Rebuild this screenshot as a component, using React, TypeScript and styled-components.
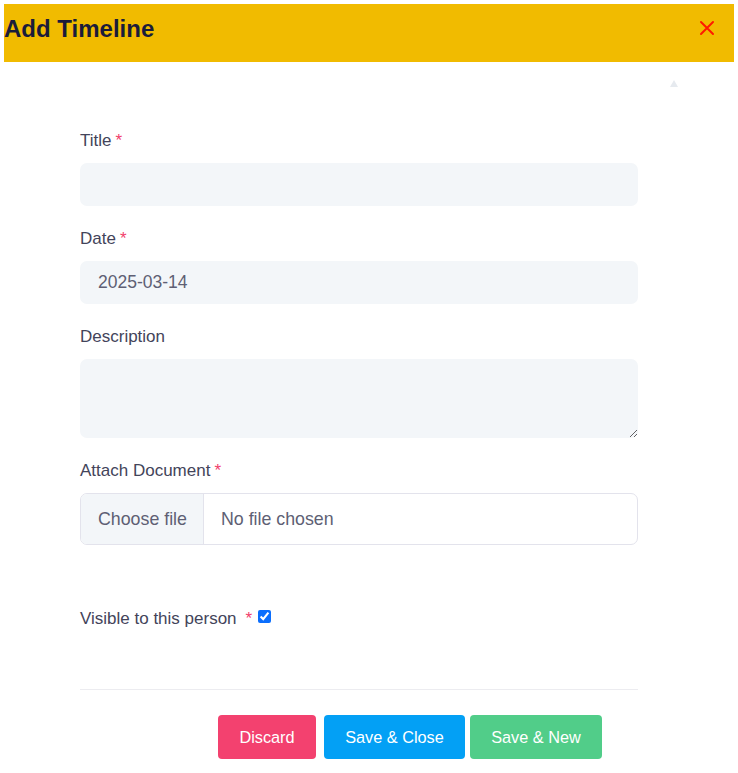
import { FunctionComponent } from "react";
import styled, { createGlobalStyle } from "styled-components";

const GlobalStyle = createGlobalStyle`
    html, body {
        margin: 0;
        padding: 0;
        background: #ffffff;
    }
    body {
        font-family: "Liberation Sans", Arial, sans-serif;
    }
`;

const StyledModal = styled.div`
    position: relative;
    padding: 4px;
    width: 738px;
    box-sizing: border-box;
`;

const Header = styled.header`
    display: flex;
    justify-content: space-between;
    align-items: flex-start;
    height: 58px;
    background: #f1bb00;
`;

const Heading = styled.h1`
    margin: 0;
    font-size: 24px;
    font-weight: 700;
    line-height: 50px;
    color: #1b1c3a;
`;

const CloseButton = styled.button`
    display: flex;
    align-items: center;
    justify-content: center;
    width: 20px;
    height: 20px;
    margin: 14px 17px 0 0;
    padding: 0;
    border: none;
    background: transparent;
    cursor: pointer;
`;

const ScrollArrow = styled.span`
    position: absolute;
    top: 80px;
    left: 670px;
    width: 0;
    height: 0;
    border-left: 4px solid transparent;
    border-right: 4px solid transparent;
    border-bottom: 7px solid #e6eaef;
`;

const Form = styled.form`
    display: flex;
    flex-direction: column;
    width: 558px;
    margin: 69px 0 0 76px;
`;

const Field = styled.div<{ $gap?: number }>`
    display: flex;
    flex-direction: column;
    margin-bottom: ${(p) => p.$gap ?? 23}px;
`;

const Label = styled.label`
    font-size: 17px;
    line-height: 20px;
    color: #43445a;
    margin-bottom: 12px;
`;

const Required = styled.span`
    color: #f1416c;
    margin-left: 4px;
`;

const TextInput = styled.input`
    box-sizing: border-box;
    height: 43px;
    padding: 0 18px;
    border: none;
    border-radius: 7px;
    background: #f3f6f9;
    font-family: inherit;
    font-size: 17.5px;
    color: #5e5f74;
    outline: none;
`;

const TextArea = styled.textarea`
    box-sizing: border-box;
    height: 79px;
    padding: 12px 18px;
    border: none;
    border-radius: 7px;
    background: #f3f6f9;
    font-family: inherit;
    font-size: 17.5px;
    color: #5e5f74;
    outline: none;
`;

const FileBox = styled.label`
    display: flex;
    align-items: stretch;
    box-sizing: border-box;
    height: 52px;
    border: 1px solid #e3e3ec;
    border-radius: 7px;
    overflow: hidden;
    font-size: 17.8px;
    color: #5e5f74;
    cursor: pointer;

    input {
        display: none;
    }
`;

const FileButton = styled.span`
    display: flex;
    align-items: center;
    padding: 0 16px 0 17px;
    background: #f3f6f9;
    border-right: 1px solid #e3e3ec;
`;

const FileName = styled.span`
    display: flex;
    align-items: center;
    padding-left: 17px;
`;

const CheckRow = styled.div`
    display: flex;
    align-items: flex-start;
    font-size: 17px;
    line-height: 20px;
    color: #43445a;
    margin-bottom: 60px;

    input {
        margin: 1px 0 0 6px;
        width: 13px;
        height: 13px;
        accent-color: #0b6efd;
    }
`;

const CheckStar = styled.span`
    color: #f1416c;
    margin-left: 9px;
`;

const Divider = styled.hr`
    width: 100%;
    margin: 0 0 25px;
    border: none;
    border-top: 1px solid #ececf0;
`;

const Actions = styled.div`
    display: flex;
    padding-left: 138px;
`;

const ActionButton = styled.button<{ $bg: string; $gapLeft?: number; $width: number }>`
    width: ${(p) => p.$width}px;
    height: 44px;
    margin-left: ${(p) => p.$gapLeft ?? 0}px;
    border: none;
    border-radius: 4px;
    background: ${(p) => p.$bg};
    color: #ffffff;
    font-family: inherit;
    font-size: 16.3px;
    cursor: pointer;
`;

const App: FunctionComponent = () => {
    return (
        <>
            <GlobalStyle />
            <StyledModal>
                <Header>
                    <Heading>Add Timeline</Heading>
                    <CloseButton type="button" aria-label="Close">
                        <svg width="16" height="16" viewBox="0 0 16 16">
                            <path d="M2 2 L14 14 M14 2 L2 14" stroke="#ff1a00" strokeWidth="2" strokeLinecap="round" />
                        </svg>
                    </CloseButton>
                </Header>
                <ScrollArrow />

                <Form onSubmit={(e) => e.preventDefault()}>
                    <Field>
                        <Label htmlFor="title">Title<Required>*</Required></Label>
                        <TextInput id="title" type="text" />
                    </Field>

                    <Field>
                        <Label htmlFor="date">Date<Required>*</Required></Label>
                        <TextInput id="date" type="text" defaultValue="2025-03-14" />
                    </Field>

                    <Field>
                        <Label htmlFor="description">Description</Label>
                        <TextArea id="description" />
                    </Field>

                    <Field $gap={64}>
                        <Label htmlFor="document">Attach Document<Required>*</Required></Label>
                        <FileBox>
                            <input id="document" type="file" />
                            <FileButton>Choose file</FileButton>
                            <FileName>No file chosen</FileName>
                        </FileBox>
                    </Field>

                    <CheckRow>
                        <span>Visible to this person</span>
                        <CheckStar>*</CheckStar>
                        <input type="checkbox" defaultChecked />
                    </CheckRow>

                    <Divider />

                    <Actions>
                        <ActionButton type="button" $bg="#f3416f" $width={98}>Discard</ActionButton>
                        <ActionButton type="submit" $bg="#03a0f5" $width={141} $gapLeft={8}>Save &amp; Close</ActionButton>
                        <ActionButton type="submit" $bg="#51cd89" $width={132} $gapLeft={5}>Save &amp; New</ActionButton>
                    </Actions>
                </Form>
            </StyledModal>
        </>
    );
}

export default App;
